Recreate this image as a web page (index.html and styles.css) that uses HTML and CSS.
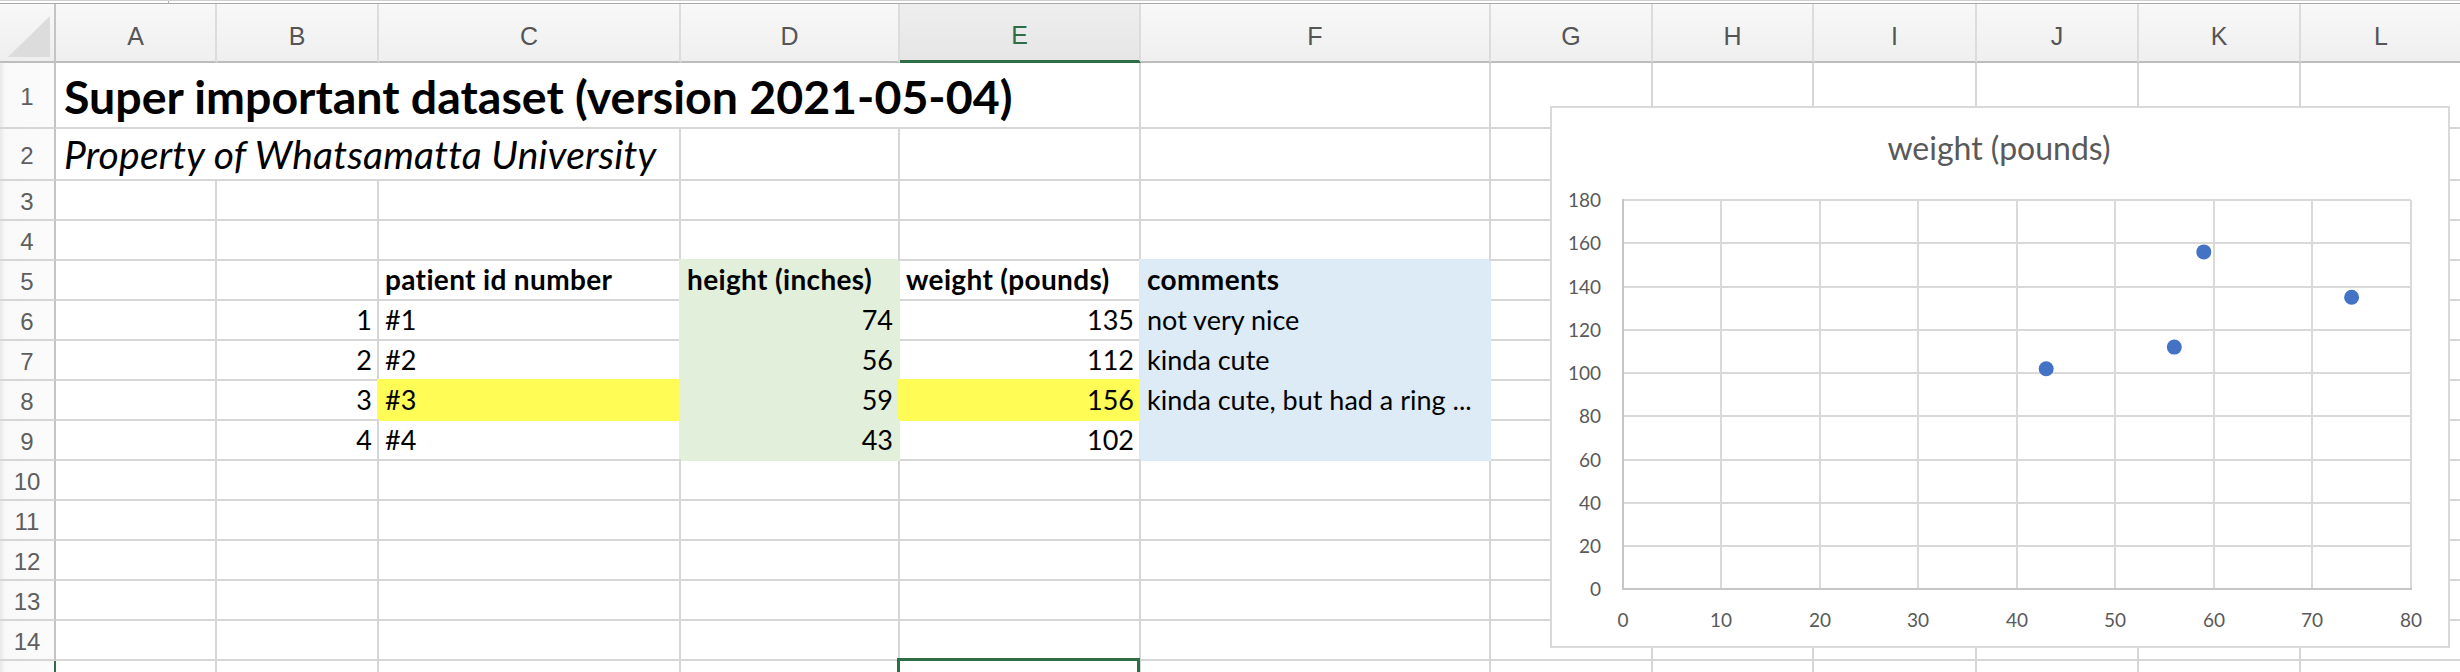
FILE: index.html
```html
<!DOCTYPE html>
<html>
<head>
<meta charset="utf-8">
<title>Sheet</title>
<link rel="stylesheet" href="styles.css">
</head>
<body>
<div class="topbar"><span class="tick"></span></div>
<div class="sheet">
  <div class="corner"><svg width="54" height="57" viewBox="0 0 54 57"><polygon points="50,12 50,53 8,53" fill="#dcdcdc"/></svg></div>
  <div class="ch">A</div><div class="ch">B</div><div class="ch">C</div><div class="ch">D</div><div class="ch sel">E</div><div class="ch">F</div><div class="ch">G</div><div class="ch">H</div><div class="ch">I</div><div class="ch">J</div><div class="ch">K</div><div class="ch">L</div>

  <div class="rh">1</div>
  <div class="c title span5">Super important dataset (version 2021-05-04)</div>
  <div class="c"></div><div class="c"></div><div class="c"></div><div class="c"></div><div class="c"></div><div class="c"></div><div class="c"></div>

  <div class="rh">2</div>
  <div class="c sub span3">Property of Whatsamatta University</div>
  <div class="c"></div><div class="c"></div><div class="c"></div><div class="c"></div><div class="c"></div><div class="c"></div><div class="c"></div><div class="c"></div><div class="c"></div>

  <div class="rh">3</div>
  <div class="c"></div><div class="c"></div><div class="c"></div><div class="c"></div><div class="c"></div><div class="c"></div><div class="c"></div><div class="c"></div><div class="c"></div><div class="c"></div><div class="c"></div><div class="c"></div>

  <div class="rh">4</div>
  <div class="c"></div><div class="c"></div><div class="c"></div><div class="c"></div><div class="c"></div><div class="c"></div><div class="c"></div><div class="c"></div><div class="c"></div><div class="c"></div><div class="c"></div><div class="c"></div>

  <div class="rh">5</div>
  <div class="c"></div><div class="c"></div>
  <div class="c b">patient id number</div>
  <div class="c b green">height (inches)</div>
  <div class="c b">weight (pounds)</div>
  <div class="c b blue">comments</div>
  <div class="c"></div><div class="c"></div><div class="c"></div><div class="c"></div><div class="c"></div><div class="c"></div>

  <div class="rh">6</div>
  <div class="c"></div>
  <div class="c r">1</div>
  <div class="c">#1</div>
  <div class="c r green">74</div>
  <div class="c r">135</div>
  <div class="c blue">not very nice</div>
  <div class="c"></div><div class="c"></div><div class="c"></div><div class="c"></div><div class="c"></div><div class="c"></div>

  <div class="rh">7</div>
  <div class="c"></div>
  <div class="c r">2</div>
  <div class="c">#2</div>
  <div class="c r green">56</div>
  <div class="c r">112</div>
  <div class="c blue">kinda cute</div>
  <div class="c"></div><div class="c"></div><div class="c"></div><div class="c"></div><div class="c"></div><div class="c"></div>

  <div class="rh">8</div>
  <div class="c"></div>
  <div class="c r">3</div>
  <div class="c yellow">#3</div>
  <div class="c r green">59</div>
  <div class="c r yellow">156</div>
  <div class="c blue">kinda cute, but had a ring ...</div>
  <div class="c"></div><div class="c"></div><div class="c"></div><div class="c"></div><div class="c"></div><div class="c"></div>

  <div class="rh">9</div>
  <div class="c"></div>
  <div class="c r">4</div>
  <div class="c">#4</div>
  <div class="c r green">43</div>
  <div class="c r">102</div>
  <div class="c blue"></div>
  <div class="c"></div><div class="c"></div><div class="c"></div><div class="c"></div><div class="c"></div><div class="c"></div>

  <div class="rh">10</div>
  <div class="c"></div><div class="c"></div><div class="c"></div><div class="c"></div><div class="c"></div><div class="c"></div><div class="c"></div><div class="c"></div><div class="c"></div><div class="c"></div><div class="c"></div><div class="c"></div>
  <div class="rh">11</div>
  <div class="c"></div><div class="c"></div><div class="c"></div><div class="c"></div><div class="c"></div><div class="c"></div><div class="c"></div><div class="c"></div><div class="c"></div><div class="c"></div><div class="c"></div><div class="c"></div>
  <div class="rh">12</div>
  <div class="c"></div><div class="c"></div><div class="c"></div><div class="c"></div><div class="c"></div><div class="c"></div><div class="c"></div><div class="c"></div><div class="c"></div><div class="c"></div><div class="c"></div><div class="c"></div>
  <div class="rh">13</div>
  <div class="c"></div><div class="c"></div><div class="c"></div><div class="c"></div><div class="c"></div><div class="c"></div><div class="c"></div><div class="c"></div><div class="c"></div><div class="c"></div><div class="c"></div><div class="c"></div>
  <div class="rh">14</div>
  <div class="c"></div><div class="c"></div><div class="c"></div><div class="c"></div><div class="c"></div><div class="c"></div><div class="c"></div><div class="c"></div><div class="c"></div><div class="c"></div><div class="c"></div><div class="c"></div>
  <div class="rh selrow"></div>
  <div class="c"></div><div class="c"></div><div class="c"></div><div class="c"></div><div class="c active"></div><div class="c"></div><div class="c"></div><div class="c"></div><div class="c"></div><div class="c"></div><div class="c"></div><div class="c"></div>
</div>

<div class="chart">
  <svg width="896" height="536" viewBox="0 0 896 536">
    <g class="grid">
      <line x1="71" y1="92" x2="859" y2="92"/>
      <line x1="71" y1="135" x2="859" y2="135"/>
      <line x1="71" y1="179" x2="859" y2="179"/>
      <line x1="71" y1="222" x2="859" y2="222"/>
      <line x1="71" y1="265" x2="859" y2="265"/>
      <line x1="71" y1="308" x2="859" y2="308"/>
      <line x1="71" y1="352" x2="859" y2="352"/>
      <line x1="71" y1="395" x2="859" y2="395"/>
      <line x1="71" y1="438" x2="859" y2="438"/>
      <line x1="169" y1="92" x2="169" y2="481"/>
      <line x1="268" y1="92" x2="268" y2="481"/>
      <line x1="366" y1="92" x2="366" y2="481"/>
      <line x1="465" y1="92" x2="465" y2="481"/>
      <line x1="563" y1="92" x2="563" y2="481"/>
      <line x1="662" y1="92" x2="662" y2="481"/>
      <line x1="760" y1="92" x2="760" y2="481"/>
      <line x1="859" y1="92" x2="859" y2="481"/>
    </g>
    <g class="axis">
      <line x1="71" y1="91" x2="71" y2="482"/>
      <line x1="70" y1="481" x2="860" y2="481"/>
    </g>
    <text class="ctitle" x="447" y="52" text-anchor="middle">weight (pounds)</text>
    <g class="tick" text-anchor="end">
      <text x="49" y="99">180</text>
      <text x="49" y="142">160</text>
      <text x="49" y="186">140</text>
      <text x="49" y="229">120</text>
      <text x="49" y="272">100</text>
      <text x="49" y="315">80</text>
      <text x="49" y="359">60</text>
      <text x="49" y="402">40</text>
      <text x="49" y="445">20</text>
      <text x="49" y="488">0</text>
    </g>
    <g class="tick" text-anchor="middle">
      <text x="71" y="519">0</text>
      <text x="169" y="519">10</text>
      <text x="268" y="519">20</text>
      <text x="366" y="519">30</text>
      <text x="465" y="519">40</text>
      <text x="563" y="519">50</text>
      <text x="662" y="519">60</text>
      <text x="760" y="519">70</text>
      <text x="859" y="519">80</text>
    </g>
    <g class="pts">
      <ellipse cx="494.2" cy="260.7" rx="7.5" ry="7.5"/>
      <ellipse cx="622.3" cy="239.1" rx="7.5" ry="7.5"/>
      <ellipse cx="651.8" cy="143.9" rx="7.5" ry="7.5"/>
      <ellipse cx="799.6" cy="189.3" rx="7.5" ry="7.5"/>
    </g>
  </svg>
</div>
</body>
</html>
```
FILE: styles.css
```css
html, body {
  margin: 0;
  padding: 0;
  background: #ffffff;
  width: 2460px;
  height: 672px;
  overflow: hidden;
}

.topbar {
  position: relative;
  height: 2px;
  border-top: 1px solid #cfcfcf;
  border-bottom: 1px solid #a9a9a9;
  background: #ffffff;
  width: 2463px;
}
.topbar .tick {
  position: absolute;
  left: 168px;
  top: 0;
  width: 1px;
  height: 2px;
  background: #b5b5b5;
}

.sheet {
  display: grid;
  grid-template-columns: 56px 161px 162px 302px 219px 241px 350px 162px 161px 163px 162px 162px 162px;
  grid-template-rows: 59px 66px 52px repeat(13, 40px);
  width: 2463px;
}

.corner {
  background: linear-gradient(#f8f8f8, #eeeeee);
  border-right: 2px solid #c4c4c4;
  border-bottom: 2px solid #bdbdbd;
  box-sizing: border-box;
  display: flex;
}
.corner svg { display: block; }

.ch {
  background: linear-gradient(#f8f8f8, #efefef);
  border-right: 2px solid #dcdcdc;
  border-bottom: 2px solid #bdbdbd;
  box-sizing: border-box;
  display: flex;
  align-items: center;
  justify-content: center;
  padding-top: 7px;
  font-family: "Liberation Sans", Arial, sans-serif;
  font-size: 25px;
  color: #555555;
}
.ch.sel {
  background: linear-gradient(#eeeeee, #e6e6e6);
  border-bottom: 3px solid #2e6d45;
  color: #2e6d45;
}

.rh {
  background: linear-gradient(90deg, #e8e8e8 0, #f9f9f9 5px, #fbfbfb 100%);
  border-right: 2px solid #c4c4c4;
  border-bottom: 2px solid #d6d6d6;
  box-sizing: border-box;
  display: flex;
  align-items: center;
  justify-content: center;
  padding-top: 3px;
  font-family: "Liberation Sans", Arial, sans-serif;
  font-size: 24px;
  color: #5e5e5e;
}
.rh.selrow { border-right-color: #2e6d45; }

.c {
  border-right: 2px solid #d6d6d6;
  border-bottom: 2px solid #d6d6d6;
  box-sizing: border-box;
  display: flex;
  align-items: flex-end;
  padding: 0 6px 6px 6px;
  font-family: Lato, "Liberation Sans", sans-serif;
  font-size: 27px;
  line-height: 1;
  color: #000000;
  white-space: nowrap;
  min-width: 0;
}
.c.r { justify-content: flex-end; padding-right: 5px; }
.c.b {
  font-weight: 700;
  font-size: 28px;
  letter-spacing: 0.35px;
}

.span5 { grid-column: span 5; }
.span3 { grid-column: span 3; }

.title {
  font-size: 46.5px;
  font-weight: 700;
  padding-left: 8px;
  padding-bottom: 8px;
}
.sub {
  font-size: 39px;
  font-style: italic;
  letter-spacing: 0.2px;
  padding-left: 8px;
  padding-bottom: 5px;
}

.green {
  background: #e2efda;
  border-color: #e2efda;
  box-shadow: -2px -2px 0 0 #e2efda;
}
.blue {
  background: #ddebf7;
  border-color: #ddebf7;
  box-shadow: -2px -2px 0 0 #ddebf7;
}
.yellow {
  background: #fffc55;
  border-color: #fffc55;
  box-shadow: -2px -2px 0 0 #fffc55;
}

.active { position: relative; }
.active::after {
  content: "";
  position: absolute;
  left: -3px;
  top: -3px;
  right: -1px;
  bottom: -4px;
  border: 3px solid #2e6d45;
}

.chart {
  position: absolute;
  left: 1550px;
  top: 106px;
  width: 900px;
  height: 542px;
  border: 2px solid #d9d9d9;
  box-sizing: border-box;
  background: #ffffff;
}
.chart svg { display: block; }
.grid line { stroke: #d9d9d9; stroke-width: 2; }
.axis line { stroke: #c6c6c6; stroke-width: 2; }
.ctitle {
  font-family: Lato, "Liberation Sans", sans-serif;
  font-size: 32px;
  fill: #595959;
}
.tick text {
  font-family: Lato, "Liberation Sans", sans-serif;
  font-size: 19px;
  fill: #595959;
}
.pts ellipse { fill: #4472c4; }
```
